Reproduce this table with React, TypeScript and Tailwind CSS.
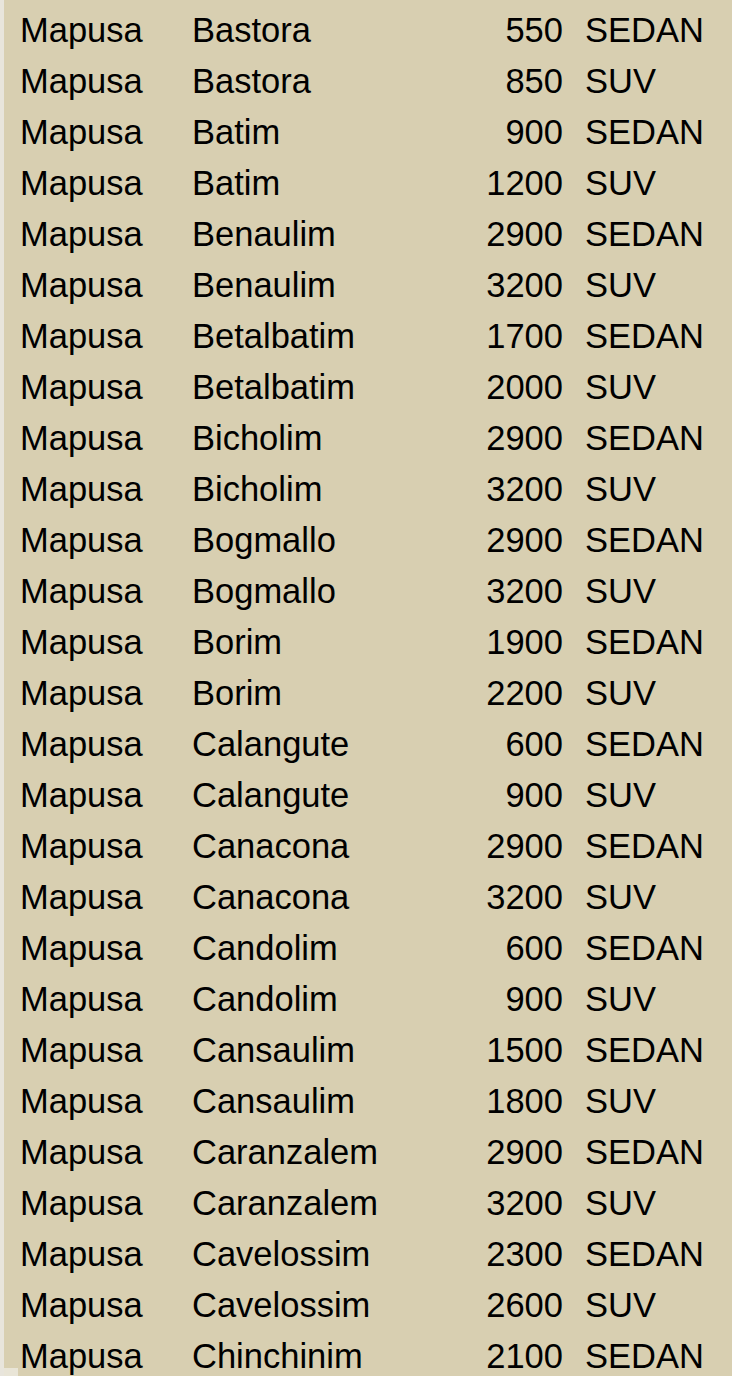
import React from "react";

const rows: [string, string, string, string][] = [
  ["Mapusa", "Bastora", "550", "SEDAN"],
  ["Mapusa", "Bastora", "850", "SUV"],
  ["Mapusa", "Batim", "900", "SEDAN"],
  ["Mapusa", "Batim", "1200", "SUV"],
  ["Mapusa", "Benaulim", "2900", "SEDAN"],
  ["Mapusa", "Benaulim", "3200", "SUV"],
  ["Mapusa", "Betalbatim", "1700", "SEDAN"],
  ["Mapusa", "Betalbatim", "2000", "SUV"],
  ["Mapusa", "Bicholim", "2900", "SEDAN"],
  ["Mapusa", "Bicholim", "3200", "SUV"],
  ["Mapusa", "Bogmallo", "2900", "SEDAN"],
  ["Mapusa", "Bogmallo", "3200", "SUV"],
  ["Mapusa", "Borim", "1900", "SEDAN"],
  ["Mapusa", "Borim", "2200", "SUV"],
  ["Mapusa", "Calangute", "600", "SEDAN"],
  ["Mapusa", "Calangute", "900", "SUV"],
  ["Mapusa", "Canacona", "2900", "SEDAN"],
  ["Mapusa", "Canacona", "3200", "SUV"],
  ["Mapusa", "Candolim", "600", "SEDAN"],
  ["Mapusa", "Candolim", "900", "SUV"],
  ["Mapusa", "Cansaulim", "1500", "SEDAN"],
  ["Mapusa", "Cansaulim", "1800", "SUV"],
  ["Mapusa", "Caranzalem", "2900", "SEDAN"],
  ["Mapusa", "Caranzalem", "3200", "SUV"],
  ["Mapusa", "Cavelossim", "2300", "SEDAN"],
  ["Mapusa", "Cavelossim", "2600", "SUV"],
  ["Mapusa", "Chinchinim", "2100", "SEDAN"],
];

export default function App() {
  return (
    <div className="relative flex h-[1376px] w-[732px] overflow-hidden bg-[#d8cfb1] font-['Liberation_Sans',Arial,sans-serif] text-black">
      <div className="w-[4px] shrink-0 bg-[#e8e5dc]" />
      <div className="flex flex-1 flex-col pt-[5px]">
        {rows.map((r, i) => (
          <div
            key={i}
            className="grid h-[51px] shrink-0 grid-cols-[172px_200px_171px_1fr] items-center pl-[16px] text-[34.5px] leading-[51px]"
          >
            <span>{r[0]}</span>
            <span>{r[1]}</span>
            <span className="text-right">{r[2]}</span>
            <span className="pl-[22px]">{r[3]}</span>
          </div>
        ))}
      </div>
      <div className="absolute bottom-0 left-[4px] h-[8px] w-[14px] bg-[#e9e5d7]" />
    </div>
  );
}
